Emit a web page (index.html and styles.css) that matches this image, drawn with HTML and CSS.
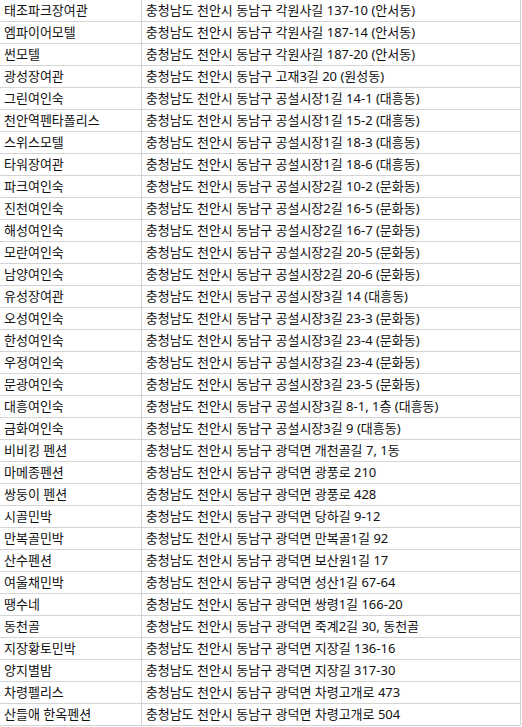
FILE: index.html
```html
<!DOCTYPE html>
<html lang="ko">
<head>
<meta charset="utf-8">
<link rel="stylesheet" href="styles.css">
</head>
<body>
<div class="sheet">
  <div class="row"><div class="name">태조파크장여관</div><div class="addr">충청남도 천안시 동남구 각원사길 137-10 (안서동)</div></div>
  <div class="row"><div class="name">엠파이어모텔</div><div class="addr">충청남도 천안시 동남구 각원사길 187-14 (안서동)</div></div>
  <div class="row"><div class="name">썬모텔</div><div class="addr">충청남도 천안시 동남구 각원사길 187-20 (안서동)</div></div>
  <div class="row"><div class="name">광성장여관</div><div class="addr">충청남도 천안시 동남구 고재3길 20 (원성동)</div></div>
  <div class="row"><div class="name">그린여인숙</div><div class="addr">충청남도 천안시 동남구 공설시장1길 14-1 (대흥동)</div></div>
  <div class="row"><div class="name">천안역펜타폴리스</div><div class="addr">충청남도 천안시 동남구 공설시장1길 15-2 (대흥동)</div></div>
  <div class="row"><div class="name">스위스모텔</div><div class="addr">충청남도 천안시 동남구 공설시장1길 18-3 (대흥동)</div></div>
  <div class="row"><div class="name">타워장여관</div><div class="addr">충청남도 천안시 동남구 공설시장1길 18-6 (대흥동)</div></div>
  <div class="row"><div class="name">파크여인숙</div><div class="addr">충청남도 천안시 동남구 공설시장2길 10-2 (문화동)</div></div>
  <div class="row"><div class="name">진천여인숙</div><div class="addr">충청남도 천안시 동남구 공설시장2길 16-5 (문화동)</div></div>
  <div class="row"><div class="name">해성여인숙</div><div class="addr">충청남도 천안시 동남구 공설시장2길 16-7 (문화동)</div></div>
  <div class="row"><div class="name">모란여인숙</div><div class="addr">충청남도 천안시 동남구 공설시장2길 20-5 (문화동)</div></div>
  <div class="row"><div class="name">남양여인숙</div><div class="addr">충청남도 천안시 동남구 공설시장2길 20-6 (문화동)</div></div>
  <div class="row"><div class="name">유성장여관</div><div class="addr">충청남도 천안시 동남구 공설시장3길 14 (대흥동)</div></div>
  <div class="row"><div class="name">오성여인숙</div><div class="addr">충청남도 천안시 동남구 공설시장3길 23-3 (문화동)</div></div>
  <div class="row"><div class="name">한성여인숙</div><div class="addr">충청남도 천안시 동남구 공설시장3길 23-4 (문화동)</div></div>
  <div class="row"><div class="name">우정여인숙</div><div class="addr">충청남도 천안시 동남구 공설시장3길 23-4 (문화동)</div></div>
  <div class="row"><div class="name">문광여인숙</div><div class="addr">충청남도 천안시 동남구 공설시장3길 23-5 (문화동)</div></div>
  <div class="row"><div class="name">대흥여인숙</div><div class="addr">충청남도 천안시 동남구 공설시장3길 8-1, 1층 (대흥동)</div></div>
  <div class="row"><div class="name">금화여인숙</div><div class="addr">충청남도 천안시 동남구 공설시장3길 9 (대흥동)</div></div>
  <div class="row"><div class="name">비비킹 펜션</div><div class="addr">충청남도 천안시 동남구 광덕면 개천골길 7, 1동</div></div>
  <div class="row"><div class="name">마메종펜션</div><div class="addr">충청남도 천안시 동남구 광덕면 광풍로 210</div></div>
  <div class="row"><div class="name">쌍둥이 펜션</div><div class="addr">충청남도 천안시 동남구 광덕면 광풍로 428</div></div>
  <div class="row"><div class="name">시골민박</div><div class="addr">충청남도 천안시 동남구 광덕면 당하길 9-12</div></div>
  <div class="row"><div class="name">만복골민박</div><div class="addr">충청남도 천안시 동남구 광덕면 만복골1길 92</div></div>
  <div class="row"><div class="name">산수펜션</div><div class="addr">충청남도 천안시 동남구 광덕면 보산원1길 17</div></div>
  <div class="row"><div class="name">여울채민박</div><div class="addr">충청남도 천안시 동남구 광덕면 성산1길 67-64</div></div>
  <div class="row"><div class="name">땡수네</div><div class="addr">충청남도 천안시 동남구 광덕면 쌍령1길 166-20</div></div>
  <div class="row"><div class="name">동천골</div><div class="addr">충청남도 천안시 동남구 광덕면 죽계2길 30, 동천골</div></div>
  <div class="row"><div class="name">지장황토민박</div><div class="addr">충청남도 천안시 동남구 광덕면 지장길 136-16</div></div>
  <div class="row"><div class="name">양지별밤</div><div class="addr">충청남도 천안시 동남구 광덕면 지장길 317-30</div></div>
  <div class="row"><div class="name">차령펠리스</div><div class="addr">충청남도 천안시 동남구 광덕면 차령고개로 473</div></div>
  <div class="row"><div class="name">산들애 한옥펜션</div><div class="addr">충청남도 천안시 동남구 광덕면 차령고개로 504</div></div>
</div>
</body>
</html>
```

FILE: styles.css
```css
html, body {
  margin: 0;
  padding: 0;
  background: #ffffff;
}

.sheet {
  width: 521px;
  font-family: "Noto Sans", "Noto Sans CJK KR", sans-serif;
  font-size: 13px;
  color: #111111;
}

.row {
  display: flex;
  height: 21px;
  border-bottom: 1px solid #d4d4d4;
}

.name,
.addr {
  line-height: 21px;
  white-space: nowrap;
  overflow: hidden;
  border-right: 1px solid #d4d4d4;
}

.name {
  width: 137px;
  padding-left: 4px;
}

.addr {
  width: 375px;
  padding-left: 4px;
}
```
